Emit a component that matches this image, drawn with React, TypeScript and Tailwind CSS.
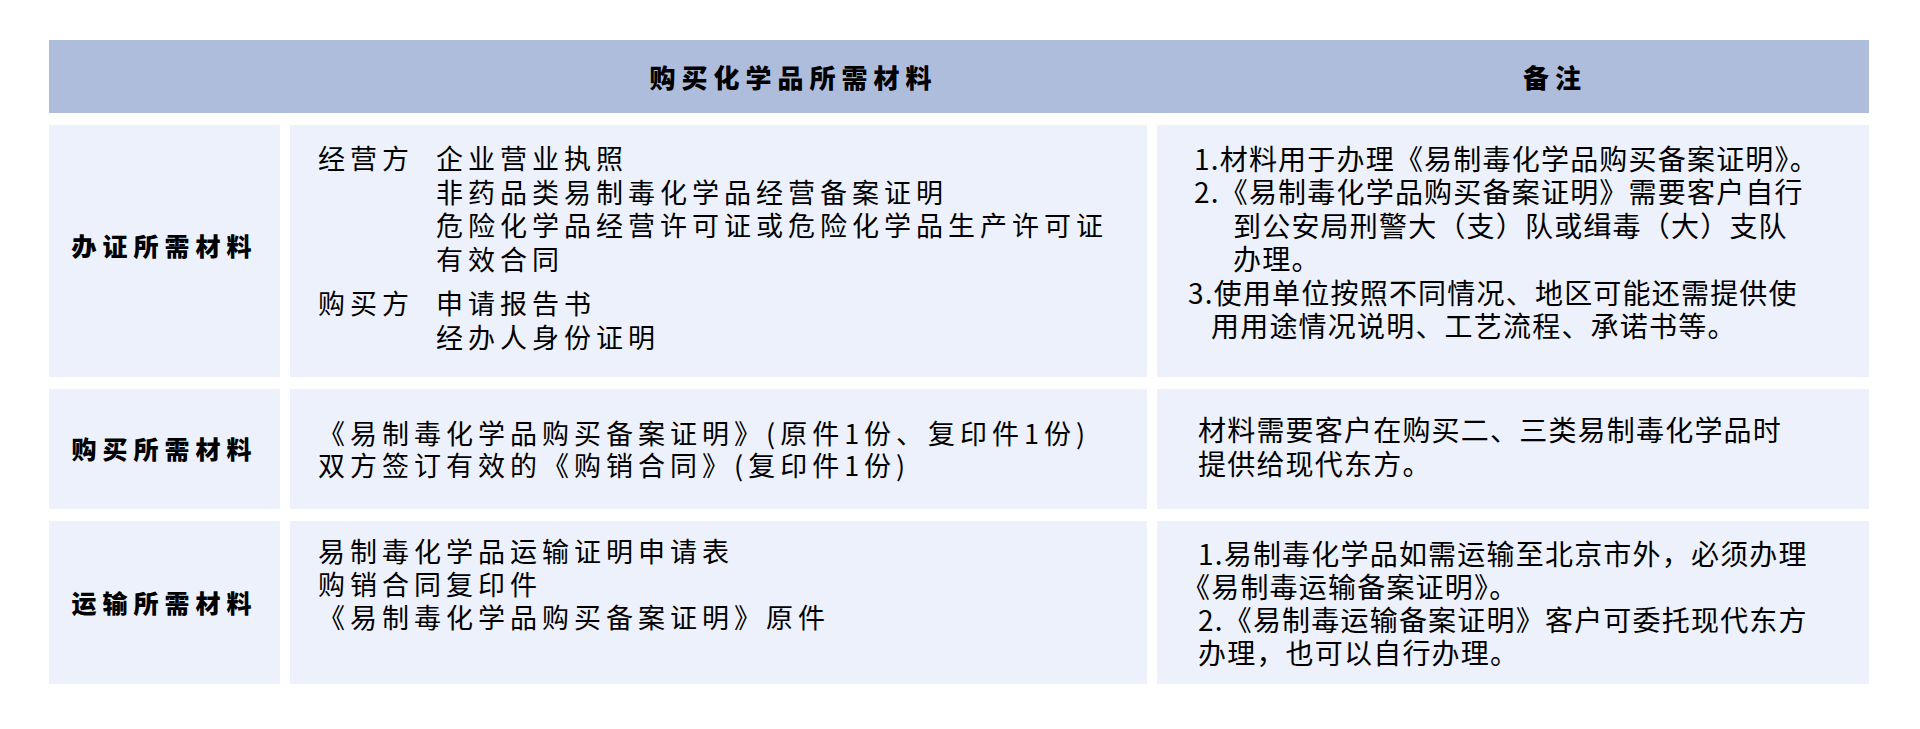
import React from "react";

const font = { fontFamily: '"Noto Sans CJK SC", "Noto Sans", sans-serif' };

export default function App() {
  return (
    <div className="w-[1920px] h-[729px] bg-white pt-[40px] pl-[49px]" style={font}>
      <div className="w-[1820px] flex flex-col gap-y-[12px] text-black">
        {/* header */}
        <div className="h-[73px] bg-[#afbddc] grid grid-cols-[231px_857px_712px] gap-x-[10px] items-center font-black text-[26px] tracking-[6px]">
          <div />
          <div className="pl-[150px] text-center">购买化学品所需材料</div>
          <div className="pl-[84px] text-center">备注</div>
        </div>

        {/* row 1 */}
        <div className="h-[252px] grid grid-cols-[231px_857px_712px] gap-x-[10px]">
          <div className="bg-[#edf1fc] flex items-center justify-center pb-[10px] font-black text-[25px] tracking-[6px]">
            办证所需材料
          </div>
          <div className="bg-[#edf1fc] pl-[28px] pt-[16px] text-[27px] tracking-[5px] leading-[33.5px] flex flex-col gap-y-[11px]">
            <div className="flex">
              <div className="w-[118px] shrink-0">经营方</div>
              <div className="flex flex-col">
                <div>企业营业执照</div>
                <div>非药品类易制毒化学品经营备案证明</div>
                <div>危险化学品经营许可证或危险化学品生产许可证</div>
                <div>有效合同</div>
              </div>
            </div>
            <div className="flex">
              <div className="w-[118px] shrink-0">购买方</div>
              <div className="flex flex-col">
                <div>申请报告书</div>
                <div>经办人身份证明</div>
              </div>
            </div>
          </div>
          <div className="bg-[#edf1fc] pl-[31px] pt-[17px] text-[28px] tracking-[1.2px] leading-[33.4px] flex flex-col">
            <div className="ml-[6px]">1.材料用于办理《易制毒化学品购买备案证明》。</div>
            <div className="ml-[6px]">2.《易制毒化学品购买备案证明》需要客户自行</div>
            <div className="ml-[45px]">到公安局刑警大（支）队或缉毒（大）支队</div>
            <div className="ml-[45px]">办理。</div>
            <div>3.使用单位按照不同情况、地区可能还需提供使</div>
            <div className="ml-[23px]">用用途情况说明、工艺流程、承诺书等。</div>
          </div>
        </div>

        {/* row 2 */}
        <div className="h-[120px] grid grid-cols-[231px_857px_712px] gap-x-[10px]">
          <div className="bg-[#edf1fc] flex items-center justify-center font-black text-[25px] tracking-[6px]">
            购买所需材料
          </div>
          <div className="bg-[#edf1fc] pl-[28px] flex flex-col justify-center text-[27px] tracking-[5px] leading-[32px]">
            <div>《易制毒化学品购买备案证明》(原件1份、复印件1份)</div>
            <div>双方签订有效的《购销合同》(复印件1份)</div>
          </div>
          <div className="bg-[#edf1fc] pl-[41px] pb-[6px] flex flex-col justify-center text-[28px] tracking-[1.2px] leading-[34px]">
            <div>材料需要客户在购买二、三类易制毒化学品时</div>
            <div>提供给现代东方。</div>
          </div>
        </div>

        {/* row 3 */}
        <div className="h-[163px] grid grid-cols-[231px_857px_712px] gap-x-[10px]">
          <div className="bg-[#edf1fc] flex items-center justify-center font-black text-[25px] tracking-[6px]">
            运输所需材料
          </div>
          <div className="bg-[#edf1fc] pl-[28px] pt-[13px] flex flex-col text-[27px] tracking-[5px] leading-[33px]">
            <div>易制毒化学品运输证明申请表</div>
            <div>购销合同复印件</div>
            <div>《易制毒化学品购买备案证明》原件</div>
          </div>
          <div className="bg-[#edf1fc] pl-[41px] flex flex-col justify-center text-[28px] tracking-[1.2px] leading-[33px]">
            <div>1.易制毒化学品如需运输至北京市外，必须办理</div>
            <div className="-ml-[16px]">《易制毒运输备案证明》。</div>
            <div>2.《易制毒运输备案证明》客户可委托现代东方</div>
            <div>办理，也可以自行办理。</div>
          </div>
        </div>
      </div>
    </div>
  );
}
